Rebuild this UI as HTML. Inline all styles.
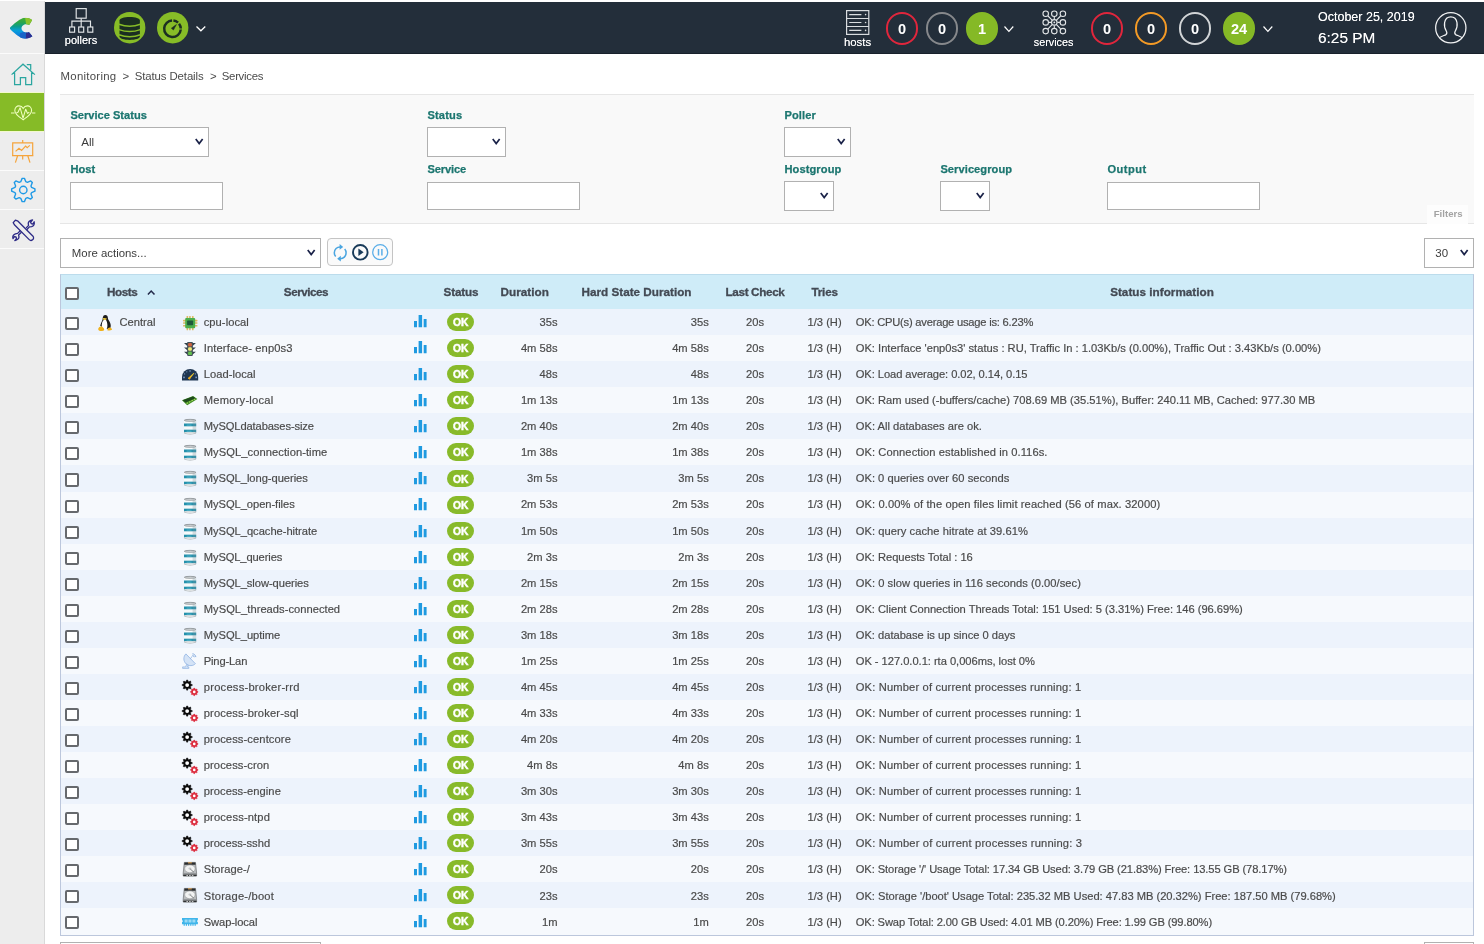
<!DOCTYPE html>
<html><head><meta charset="utf-8"><title>Centreon - Services</title><style>
*{box-sizing:border-box;margin:0;padding:0}
html,body{width:1484px;height:944px;overflow:hidden;background:#fff}
body{position:relative;will-change:transform;font-family:"Liberation Sans",sans-serif;color:#4a4a4a;font-size:11.17px}
.abs,.sb,.sbi,.tb,.tbl,.thead,.r,.r>*,.thead>*,.sel,.inp,.lbl,.circ,.tbt{position:absolute}
svg{position:absolute;overflow:visible}
/* sidebar */
.sb{left:0;top:1.3px;width:45px;height:943px;background:#ededed;border-right:1px solid #d9d9d9}
.sbi{left:0;width:44px;height:38.75px;border-top:1px solid #fbfbfb}
.sbi.act{background:#85b926;width:44px}
/* topbar */
.tb{left:45px;top:2px;width:1439px;height:51.8px;background:#232e3a;border-bottom:1px solid #18212b}
.tbt{text-shadow:0 0 0.6px rgba(255,255,255,.75);color:#fff;white-space:nowrap;font-size:11px;line-height:12px;transform:translateX(-50%)}
.circ{width:32.5px;height:32.5px;border-radius:50%;top:10px;border:2px solid #fff;color:#fff;font-weight:bold;font-size:14.6px;text-align:center;line-height:30.3px}
.circ.g{background:#85b926;border-color:#85b926}
/* breadcrumb */
.bc{position:absolute;top:69.2px;font-size:11.4px;line-height:14px;color:#4a4a4a;white-space:nowrap}
/* filters */
.fp{position:absolute;left:60px;top:94px;width:1414px;height:129.5px;background:#f9f9f9;border-top:1px solid #e6e6e6;border-bottom:1px solid #e6e6e6}
.lbl{-webkit-text-stroke:0.25px;font-weight:bold;color:#1c7670;font-size:11.1px;line-height:13px;white-space:nowrap}
.sel,.inp{background:#fff;border:1px solid #b1b1b1}
.sel i{position:absolute;right:7px;top:50%;width:8px;height:6px;margin-top:-2.5px}
.sel span{position:absolute;left:10px;top:0;line-height:28px;font-size:11.6px;color:#3c3c3c;white-space:nowrap}
.ftab{position:absolute;left:1426.75px;top:205px;width:41.5px;height:19px;background:#fdfdfd;color:#a3a3a3;font-weight:bold;font-size:9.6px;line-height:12px;padding:3.2px 0 0 7px}
.bg{position:absolute;left:327px;top:238.25px;width:66px;height:27.5px;border:1px solid #c4c4c4;border-radius:4px;background:#fafafa}
/* table */
.tbl{left:60px;top:274.25px;width:1414px;height:661.75px;background:#f6f9fd;overflow:hidden}
.tbl:after{content:"";position:absolute;left:0;top:0;right:0;bottom:0;border:1px solid #bcc7dc;border-top-color:#bcdcec;pointer-events:none}
.thead{left:0;top:0;width:100%;height:34.5px;background:#cfecf8}
.th{top:10.8px;-webkit-text-stroke:0.3px;font-weight:bold;color:#434a54;font-size:11.7px;line-height:14px;white-space:nowrap}
.c{transform:translateX(-50%)}
.r{left:0;width:100%;height:27.5px}
.r.a{background:#edf3fc}
.r.b{background:#f6f9fd}
.t{-webkit-text-stroke:0.18px;top:var(--o);line-height:26px;white-space:nowrap;color:#4a4a4a}
.ra{text-align:right}
.cb{left:5.1px;top:8.1px;width:13.9px;height:13.2px;border:2px solid #66696d;border-radius:2px;background:#fff}
.ok{left:386.75px;top:4.25px;width:27.25px;height:17.75px;border-radius:9px;background:#88ba2a;color:#fff;font-weight:bold;font-size:10.3px;line-height:19.2px;text-align:center;letter-spacing:0;-webkit-text-stroke:0.45px #fff;text-indent:0.6px}

</style></head>
<body>
<!-- sidebar -->
<div class="sb">
<svg style="left:0;top:0" width="45" height="52" viewBox="0 1.3 45 52">
<defs><linearGradient id="lg" x1="0" y1="18" x2="0" y2="39" gradientUnits="userSpaceOnUse"><stop offset="0" stop-color="#46ae33"/><stop offset="0.22" stop-color="#2aa64a"/><stop offset="0.42" stop-color="#0a9c8c"/><stop offset="0.62" stop-color="#089fdc"/><stop offset="0.8" stop-color="#0c86dc"/><stop offset="1" stop-color="#1763c8"/></linearGradient>
<clipPath id="lc"><path d="M32.2,20.3C29,18 25.5,17.5 22.5,18.5C19,19.8 13,24.8 10.3,27.6C9.8,28.2 9.8,28.9 10.3,29.5C13,32.3 19,37.4 22.5,38.6C25.5,39.5 29.5,38.9 32.4,36.6L28.9,32.2C27.7,33 25.5,33 24,32.2C22.3,31.3 21.5,30 21.5,28.6C21.5,27.2 22.3,25.9 24,25C25.5,24.2 27.5,24.4 29.2,25.2Z"/></clipPath></defs>
<g clip-path="url(#lc)"><rect x="9" y="17" width="25" height="23" fill="url(#lg)"/><path d="M24.8 16h9v13h-7z" fill="#8cc22c"/><path d="M25.6 30l3-1l6 9l-9 3z" fill="#2e2c8e"/><path d="M20 33.5l5.6-2l0 9h-6z" fill="#1763c8"/></g>
</svg>
<div class="sbi" style="top:51.7px">
<svg style="left:10.6px;top:8.3px" width="25" height="23.5" viewBox="0 0 25 23.5"><path d="M0.6 12.6L12 2.2L23.9 12.6M3.6 10.4V22.7H9.4V15.6H14.7V22.7H20.6V10.4M15.8 2.7H19.7V7.8" fill="none" stroke="#2ba6a0" stroke-width="1.25" stroke-linejoin="miter"/></svg>
</div>
<div class="sbi act" style="top:90.4px;height:40.3px;border:0;background:linear-gradient(to bottom,#f3f9cd 0,#f3f9cd 1.5px,#86bb27 1.5px,#86bb27 38.9px,#f3f9cd 38.9px)">
<svg style="left:10.8px;top:13.3px" width="24.4" height="16.4" viewBox="0 0 24.4 16.4"><path d="M0 8H3.6M5.2 8.1L7 7.2L9.1 2.7L12.05 13.1L14.7 4.2L16.5 8.4L18.3 7.2M21 8H24.4" fill="none" stroke="#f0ffc0" stroke-width="1.05" stroke-linejoin="round"/><path d="M12.2 14.8C9 12.4 3.8 9.4 3.8 5.4C3.8 2.8 5.8 0.9 8 0.9C9.8 0.9 11.4 1.9 12.2 3.4C13 1.9 14.6 0.9 16.4 0.9C18.6 0.9 20.6 2.8 20.6 5.4C20.6 9.4 15.4 12.4 12.2 14.8Z" fill="none" stroke="#f0ffc0" stroke-width="1.05"/></svg>
</div>
<div class="sbi" style="top:129.8px;border-top:0">
<svg style="left:12.2px;top:9px" width="21.4" height="23" viewBox="0 0 21.4 23"><path d="M0.7 2.8H20.7V15.6H0.7ZM10.7 0V2.8M0 15.6H21.4M5.6 15.8L3.4 22.6M15.8 15.8L18 22.6M10.7 15.8V19.6M3.6 11.4L7 8.2L9.6 10.4L13.6 6L15.2 7.6L17.8 5.4" fill="none" stroke="#f5a43c" stroke-width="1.2"/></svg>
</div>
<div class="sbi" style="top:168.7px">
<svg style="left:10.6px;top:7.2px" width="24.6" height="24" viewBox="-12.3 -12 24.6 24"><path d="M11.64 -1.15 L11.64 1.15 L8.33 2.53 L7.67 4.10 L9.04 7.42 L7.42 9.04 L4.10 7.67 L2.53 8.33 L1.15 11.64 L-1.15 11.64 L-2.53 8.33 L-4.10 7.67 L-7.42 9.04 L-9.04 7.42 L-7.67 4.10 L-8.33 2.53 L-11.64 1.15 L-11.64 -1.15 L-8.33 -2.53 L-7.67 -4.10 L-9.04 -7.42 L-7.42 -9.04 L-4.10 -7.67 L-2.53 -8.33 L-1.15 -11.64 L1.15 -11.64 L2.53 -8.33 L4.10 -7.67 L7.42 -9.04 L9.04 -7.42 L7.67 -4.10 L8.33 -2.53Z" fill="none" stroke="#1f9ae6" stroke-width="1.4" stroke-linejoin="round"/><circle r="3.7" fill="none" stroke="#1f9ae6" stroke-width="1.4"/></svg>
</div>
<div class="sbi" style="top:207.9px">
<svg style="left:12px;top:8.6px" width="22.6" height="22.8" viewBox="0 0 22.6 22.8"><g fill="none" stroke="#2d2a86" stroke-width="1.3" stroke-linejoin="round" stroke-linecap="round"><path d="M1.2 3.6L3.4 1.2L6 2.2L21 17.2C22 18.4 21.6 20 20.6 20.8C19.6 21.6 18.2 21.6 17.2 20.6L2.4 5.8Z"/><path d="M14.4 8.6L16.6 6.4C15.8 4.2 16.8 2.2 18.8 1.4L20.6 0.9L18.6 3.2L19.2 4.6L20.8 5L22.2 2.8C22.6 5 21.6 7 19.6 7.6L17.4 7.9L15.2 10.2M9.2 13.6L6.6 16C7.4 18.2 6.6 20.2 4.6 21L2.8 21.6L4.6 19.4L4 18L2.4 17.6L1 19.6C0.4 17.6 1.4 15.6 3.4 14.8L5.6 14.4L8 12"/></g></svg>
</div>
<div class="sbi" style="top:246.7px;height:1px"></div>
</div>

<!-- topbar -->
<div class="tb">
<svg style="left:23.8px;top:6.2px" width="24.4" height="24.8" viewBox="0 0 24.4 24.8"><g fill="none" stroke="#e3e6e8" stroke-width="1.15"><rect x="7.2" y="0.6" width="10" height="9.6"/><path d="M12.2 10.2V19M2.9 19V13.2H21.5V19"/><rect x="0.6" y="19" width="5" height="5.2"/><rect x="9.7" y="19" width="5" height="5.2"/><rect x="18.8" y="19" width="5" height="5.2"/></g></svg>
<div class="tbt" style="left:36px;top:32.4px;font-size:11px">pollers</div>
<!-- db circle -->
<svg style="left:68.85px;top:9.7px" width="31.4" height="31.4" viewBox="0 0 31.4 31.4"><circle cx="15.7" cy="15.7" r="15.7" fill="#87bc27"/><path d="M5.5 8.6C5.5 6.6 10 5.1 15.7 5.1S25.9 6.6 25.9 8.6V24.6C25.9 26.6 21.4 28 15.7 28S5.5 26.6 5.5 24.6Z" fill="#1b2e22"/><g fill="none" stroke="#87bc27" stroke-width="1.45"><path d="M5 12.3Q15.7 16.4 26.4 12.3"/><path d="M5 17.6Q15.7 21.4 26.4 17.6"/><path d="M5 22.8Q15.7 26.6 26.4 22.8"/></g></svg>
<!-- gauge circle -->
<svg style="left:112.1px;top:9.7px" width="31.4" height="31.4" viewBox="0 0 31.4 31.4"><circle cx="15.7" cy="15.7" r="15.7" fill="#87bc27"/><circle cx="15.5" cy="16.8" r="8.3" fill="none" stroke="#1b2e22" stroke-width="2.5" stroke-dasharray="37.7 1.4 5.15 1.4 5.15 1.4" transform="rotate(4.8 15.5 16.8)"/><path d="M14.4 16.2L19.4 12.6L16.4 18Z" fill="#1b2e22" stroke="#1b2e22" stroke-width="0.6" stroke-linejoin="round"/></svg>
<svg style="left:150.6px;top:23.8px" width="9.8" height="5.6" viewBox="0 0 9.8 5.6"><path d="M0.5 0.5L4.9 4.8L9.3 0.5" fill="none" stroke="#fff" stroke-width="1.25"/></svg>

<!-- hosts -->
<svg style="left:800.6px;top:8px" width="23.4" height="25" viewBox="0 0 23.4 25"><g fill="none" stroke="#d9dde0" stroke-width="1.2"><rect x="0.6" y="0.6" width="22.2" height="23.8"/><path d="M0.6 8.5H22.8M0.6 16.5H22.8M3.2 4.6H15.4M3.2 12.5H15.4M3.2 20.4H15.4" /></g><g fill="#d9dde0"><circle cx="19.6" cy="4.6" r="0.8"/><circle cx="19.6" cy="12.5" r="0.8"/><circle cx="19.6" cy="20.4" r="0.8"/></g></svg>
<div class="tbt" style="left:812.5px;top:34.4px;font-size:11.4px">hosts</div>
<div class="circ" style="left:840.75px;border-color:#e0263c">0</div>
<div class="circ" style="left:880.75px;border-color:#86888b">0</div>
<div class="circ g" style="left:920.75px">1</div>
<svg style="left:959.4px;top:23.6px" width="9.8" height="6.4" viewBox="0 0 9.8 6.4"><path d="M0.5 0.5L4.9 5.4L9.3 0.5" fill="none" stroke="#fff" stroke-width="1.2"/></svg>
<!-- services -->
<svg style="left:996.5px;top:8px" width="24.6" height="24.8" viewBox="0 0 24.6 24.8"><g fill="none" stroke="#e3e6e8" stroke-width="1.1"><path d="M12.3 9.3V6.8M12.3 15.5V18M9.2 12.4H6.7M15.4 12.4H17.9M10.1 10.2L6 6M14.5 10.2L18.6 6M10.1 14.6L6 18.8M14.5 14.6L18.6 18.8"/><circle cx="3.7" cy="3.7" r="2.75"/><circle cx="12.3" cy="3.7" r="2.75"/><circle cx="20.9" cy="3.7" r="2.75"/><circle cx="3.7" cy="12.4" r="2.75"/><circle cx="12.3" cy="12.4" r="2.75"/><circle cx="20.9" cy="12.4" r="2.75"/><circle cx="3.7" cy="21.1" r="2.75"/><circle cx="12.3" cy="21.1" r="2.75"/><circle cx="20.9" cy="21.1" r="2.75"/></g><circle cx="12.3" cy="12.4" r="0.9" fill="#e3e6e8"/></svg>
<div class="tbt" style="left:1008.6px;top:34.4px;font-size:10.8px">services</div>
<div class="circ" style="left:1045.75px;border-color:#e0263c">0</div>
<div class="circ" style="left:1089.75px;border-color:#f39a26">0</div>
<div class="circ" style="left:1133.75px;border-color:#d1d4d6">0</div>
<div class="circ g" style="left:1177.75px">24</div>
<svg style="left:1218.4px;top:23.6px" width="9.8" height="6.4" viewBox="0 0 9.8 6.4"><path d="M0.5 0.5L4.9 5.4L9.3 0.5" fill="none" stroke="#fff" stroke-width="1.2"/></svg>
<div class="abs" style="left:1273px;top:8.4px;text-shadow:0 0 0.6px rgba(255,255,255,.7);color:#fff;font-size:12.5px;line-height:14px;white-space:nowrap">October 25, 2019</div>
<div class="abs" style="left:1273px;top:26.6px;text-shadow:0 0 0.6px rgba(255,255,255,.7);color:#fff;font-size:15.4px;line-height:18px;white-space:nowrap">6:25 PM</div>
<svg style="left:1390.3px;top:10px" width="31.6" height="31.6" viewBox="0 0 31.6 31.6"><defs><clipPath id="uc"><circle cx="15.8" cy="15.8" r="15"/></clipPath></defs><circle cx="15.8" cy="15.8" r="15.15" fill="none" stroke="#f2f3f4" stroke-width="1.25"/><path clip-path="url(#uc)" d="M2.5 27.5C4.5 24.6 8.6 23.8 11 22.6C12.2 21.6 12 20.2 11.2 18.8C9.6 16.4 9.2 13.4 9.6 10.6C10.2 7 12.6 4.8 15.8 4.8S21.4 7 22 10.6C22.4 13.4 22 16.4 20.4 18.8C19.6 20.2 19.4 21.6 20.6 22.6C23 23.8 27.1 24.6 29.1 27.5" fill="none" stroke="#f2f3f4" stroke-width="1.25"/></svg>
</div>

<!-- breadcrumb -->
<div class="bc" style="left:60.5px;letter-spacing:0.28px">Monitoring</div><div class="bc" style="left:122.4px">&gt;</div><div class="bc" style="left:134.8px;letter-spacing:-0.11px">Status Details</div><div class="bc" style="left:209.9px">&gt;</div><div class="bc" style="left:221.8px;letter-spacing:-0.3px">Services</div>

<!-- filter panel -->
<div class="fp"></div>
<div class="lbl" style="left:70.4px;top:109.3px">Service Status</div>
<div class="sel" style="left:70.25px;top:127.25px;width:138.75px;height:29.75px"><span>All</span><svg style="right:4.7px;top:50%;margin-top:-4.4px" width="8.4" height="7" viewBox="0 0 8.4 7"><path d="M0.75 1L4.2 5.5L7.65 1" fill="none" stroke="#1a2248" stroke-width="1.7"/></svg></div>
<div class="lbl" style="left:427.4px;top:109.3px;letter-spacing:0.182px">Status</div>
<div class="sel" style="left:427.25px;top:127.25px;width:79px;height:29.75px"><svg style="right:4.7px;top:50%;margin-top:-4.4px" width="8.4" height="7" viewBox="0 0 8.4 7"><path d="M0.75 1L4.2 5.5L7.65 1" fill="none" stroke="#1a2248" stroke-width="1.7"/></svg></div>
<div class="lbl" style="left:784.4px;top:109.3px;letter-spacing:0.112px">Poller</div>
<div class="sel" style="left:784.25px;top:127.25px;width:66.75px;height:29.75px"><svg style="right:4.7px;top:50%;margin-top:-4.4px" width="8.4" height="7" viewBox="0 0 8.4 7"><path d="M0.75 1L4.2 5.5L7.65 1" fill="none" stroke="#1a2248" stroke-width="1.7"/></svg></div>
<div class="lbl" style="left:70.4px;top:163.3px;letter-spacing:0.086px">Host</div>
<div class="inp" style="left:70.25px;top:182.25px;width:152.75px;height:27.5px"></div>
<div class="lbl" style="left:427.4px;top:163.3px;letter-spacing:-0.105px">Service</div>
<div class="inp" style="left:427.25px;top:182.25px;width:152.75px;height:27.5px"></div>
<div class="lbl" style="left:784.4px;top:163.3px;letter-spacing:0.102px">Hostgroup</div>
<div class="sel" style="left:784.25px;top:181px;width:50px;height:29.9px"><svg style="right:4.7px;top:50%;margin-top:-4.4px" width="8.4" height="7" viewBox="0 0 8.4 7"><path d="M0.75 1L4.2 5.5L7.65 1" fill="none" stroke="#1a2248" stroke-width="1.7"/></svg></div>
<div class="lbl" style="left:940.4px;top:163.3px;letter-spacing:0.070px">Servicegroup</div>
<div class="sel" style="left:940.25px;top:181px;width:50px;height:29.9px"><svg style="right:4.7px;top:50%;margin-top:-4.4px" width="8.4" height="7" viewBox="0 0 8.4 7"><path d="M0.75 1L4.2 5.5L7.65 1" fill="none" stroke="#1a2248" stroke-width="1.7"/></svg></div>
<div class="lbl" style="left:1107.4px;top:163.3px;letter-spacing:0.500px">Output</div>
<div class="inp" style="left:1107.25px;top:182.25px;width:152.75px;height:27.5px"></div>
<div class="ftab">Filters</div>

<!-- actions row -->
<div class="sel" style="left:60.25px;top:238.25px;width:260.5px;height:29.4px"><span style="left:10.6px;line-height:28.6px;font-size:11.4px">More actions...</span><svg style="right:4.7px;top:50%;margin-top:-4.4px" width="8.4" height="7" viewBox="0 0 8.4 7"><path d="M0.75 1L4.2 5.5L7.65 1" fill="none" stroke="#1a2248" stroke-width="1.7"/></svg></div>
<div class="bg">
<svg style="left:5.2px;top:4.4px" width="14.4" height="17.4" viewBox="0 0 14.4 17.4"><g fill="none" stroke="#4aa5e0" stroke-width="1.5"><path d="M7.4 2.9C4 2.7 1.3 5.4 1.3 8.8C1.3 10.3 1.8 11.5 2.7 12.6"/><path d="M7 14.7C10.4 14.9 13.1 12.2 13.1 8.8C13.1 7.3 12.6 6.1 11.7 5"/></g><path d="M6.6 0L10.2 2.9L6.6 5.8Z" fill="#4aa5e0"/><path d="M7.8 11.8L4.2 14.7L7.8 17.6Z" fill="#4aa5e0"/></svg>
<svg style="left:23.9px;top:4.6px" width="16.6" height="16.6" viewBox="0 0 16.6 16.6"><circle cx="8.3" cy="8.3" r="7.3" fill="none" stroke="#183a59" stroke-width="1.9"/><path d="M6.4 4.6L11.6 8.3L6.4 12Z" fill="#183a59"/></svg>
<svg style="left:44.2px;top:4.6px" width="16.4" height="16.4" viewBox="0 0 16.4 16.4"><circle cx="8.2" cy="8.2" r="7.5" fill="none" stroke="#5aaee8" stroke-width="1.25"/><path d="M6.5 5V11.4M9.9 5V11.4" stroke="#5aaee8" stroke-width="1.5"/></svg>
</div>
<div class="sel" style="left:1424.25px;top:238.25px;width:49.5px;height:29.4px"><span style="left:10px;line-height:28.6px;font-size:11.5px">30</span><svg style="right:4.7px;top:50%;margin-top:-4.4px" width="8.4" height="7" viewBox="0 0 8.4 7"><path d="M0.75 1L4.2 5.5L7.65 1" fill="none" stroke="#1a2248" stroke-width="1.7"/></svg></div>
<div class="tbl">
<div class="thead"><span class="cb" style="left:5.1px;top:12.8px"></span><span class="th" style="left:47px;letter-spacing:-0.447px">Hosts</span><svg style="left:86.6px;top:15.9px" width="8.4" height="5.2" viewBox="0 0 8.4 5.2"><path d="M0.9 4.6L4.2 1.1L7.5 4.6" fill="none" stroke="#232a4a" stroke-width="1.5"/></svg><span class="th c" style="left:246px;letter-spacing:-0.480px">Services</span><span class="th c" style="left:401px;letter-spacing:-0.122px">Status</span><span class="th c" style="left:464.75px;letter-spacing:0.057px">Duration</span><span class="th c" style="left:576.5px;letter-spacing:0.013px">Hard State Duration</span><span class="th c" style="left:695px;letter-spacing:-0.336px">Last Check</span><span class="th c" style="left:764.6px;letter-spacing:-0.209px">Tries</span><span class="th c" style="left:1102px;letter-spacing:0.028px">Status information</span></div>
<div class="r a" style="top:34.25px;--o:0.29px"><span class="cb"></span><svg style="left:37.8px;top:6.05px" width="14.4" height="16.2" viewBox="0 0 14.4 16.2"><path fill="#1c1c1c" d="M7.2 0C9 0 9.9 1.3 9.9 3C9.9 4.5 11.4 6 12.2 8C13 10 12.9 12 12.3 13L9.4 14L4.6 12L2.2 11C2.6 8.6 4 6.4 4.6 4.6C4.8 3.6 4.6 0 7.2 0Z"/><path fill="#fff" d="M6.8 4.4C8.2 4.4 9 6.5 9.3 9C9.6 11.4 9.4 14.6 7 14.6C4.6 14.6 3.6 11.6 3.8 9.4C4.1 6.8 5.4 4.4 6.8 4.4Z"/><path fill="#e3c23e" d="M4.7 3.3C5.9 2.7 8 2.8 8.8 3.4C8.6 4.5 7.6 5.1 6.6 5.1C5.6 5.1 4.7 4.3 4.7 3.3Z"/><path fill="#f0b21e" d="M0.2 14C0.2 12.4 2.4 10.8 4 11.6C5 12.4 6.4 13.6 6.2 14.8C6 15.8 4.4 16.1 3 16.1C1.6 16.1 0.2 15.4 0.2 14ZM9.4 14.4C9.6 13 11.4 12.2 12.6 12.8C13.6 13.4 14.2 14 14 14.6C13.6 15.4 11.6 15.6 10.6 15.6C9.8 15.6 9.3 15.2 9.4 14.4Z"/></svg><span class="t" style="left:59.5px">Central</span><svg style="left:122.8px;top:7.05px" width="14.5" height="14.3" viewBox="0 0 14.5 14.3"><g fill="#dcb95e"><rect x="3.55" y="0" width="1.6" height="14.3" rx="0.6"/><rect x="6.1" y="0" width="1.6" height="14.3" rx="0.6"/><rect x="9.0" y="0" width="1.6" height="14.3" rx="0.6"/><rect x="0" y="3.8" width="14.5" height="1.6" rx="0.6"/><rect x="0" y="6.2" width="14.5" height="1.6" rx="0.6"/><rect x="0" y="8.9" width="14.5" height="1.6" rx="0.6"/></g><rect x="2.2" y="2.1" width="10" height="10.1" rx="1" fill="#4cae4c"/><rect x="4.1" y="4.6" width="6" height="4.6" rx="0.7" fill="#1f5a3a"/></svg><span class="t" id="s0" style="left:143.75px;letter-spacing:0.044px">cpu-local</span><svg style="left:353.8px;top:6.9px" width="12.6" height="12.2" viewBox="0 0 12.6 12.2"><path fill="#1f9ae0" d="M0 5.9h3v6.3h-3zM4.6 0h3.5v12.2h-3.5zM9.7 3.9h2.9v8.3h-2.9z"/></svg><span class="ok">OK</span><span class="t ra" style="right:916.5px">35s</span><span class="t ra" style="right:765.25px">35s</span><span class="t c" style="left:695px">20s</span><span class="t c" style="left:764.6px">1/3 (H)</span><span class="t" id="i0" style="left:795.75px;letter-spacing:-0.219px">OK: CPU(s) average usage is: 6.23%</span></div>
<div class="r b" style="top:60.25px;--o:0.23px"><span class="cb"></span><svg style="left:124px;top:7.2px" width="11.9" height="13.9" viewBox="0 0 11.9 13.9"><path fill="#34424a" d="M0 1.1h11.9l-3 2.6h-5.9zM0 5.4h11.9l-3 2.6h-5.9zM0 9.7h11.9l-3 2.6h-5.9z"/><rect x="3.1" y="0" width="5.8" height="13.9" rx="0.8" fill="#44525a"/><rect x="4.1" y="0.9" width="3.8" height="3.6" rx="1.2" fill="#cb6240"/><rect x="4.1" y="5.2" width="3.8" height="3.6" rx="1.2" fill="#efe876"/><rect x="4.1" y="9.5" width="3.8" height="3.6" rx="1.2" fill="#63c04e"/></svg><span class="t" id="s1" style="left:143.75px;letter-spacing:0.119px">Interface- enp0s3</span><svg style="left:353.8px;top:6.9px" width="12.6" height="12.2" viewBox="0 0 12.6 12.2"><path fill="#1f9ae0" d="M0 5.9h3v6.3h-3zM4.6 0h3.5v12.2h-3.5zM9.7 3.9h2.9v8.3h-2.9z"/></svg><span class="ok">OK</span><span class="t ra" style="right:916.5px">4m 58s</span><span class="t ra" style="right:765.25px">4m 58s</span><span class="t c" style="left:695px">20s</span><span class="t c" style="left:764.6px">1/3 (H)</span><span class="t" id="i1" style="left:795.75px">OK: Interface 'enp0s3' status : RU, Traffic In : 1.03Kb/s (0.00%), Traffic Out : 3.43Kb/s (0.00%)</span></div>
<div class="r a" style="top:86.45px;--o:0.00px"><span class="cb"></span><svg style="left:121.9px;top:8.6px" width="16.2" height="11.4" viewBox="0 0 16.2 11.4"><path fill="#1f3652" d="M0 11.4V8.1A8.1 8.1 0 0 1 16.2 8.1V11.4Z"/><g fill="#7f9cc4"><rect x="1.2" y="7.6" width="1.6" height="1.6"/><circle cx="2.6" cy="4.9" r="0.6"/><circle cx="4.8" cy="2.8" r="0.6"/><rect x="7.2" y="1.5" width="1.8" height="1"/><circle cx="13.4" cy="4.9" r="0.6"/><rect x="13.4" y="7.6" width="1.6" height="1.6"/></g><path d="M5.8 9.2L11.9 3.8L12.3 4.3L7.6 10.6Z" fill="#e9c32c"/><path d="M5.9 9.3L8.2 7.4L9 8.6L7.4 10.5Z" fill="#efa51e"/></svg><span class="t" id="s2" style="left:143.75px;letter-spacing:0.037px">Load-local</span><svg style="left:353.8px;top:6.9px" width="12.6" height="12.2" viewBox="0 0 12.6 12.2"><path fill="#1f9ae0" d="M0 5.9h3v6.3h-3zM4.6 0h3.5v12.2h-3.5zM9.7 3.9h2.9v8.3h-2.9z"/></svg><span class="ok">OK</span><span class="t ra" style="right:916.5px">48s</span><span class="t ra" style="right:765.25px">48s</span><span class="t c" style="left:695px">20s</span><span class="t c" style="left:764.6px">1/3 (H)</span><span class="t" id="i2" style="left:795.75px;letter-spacing:-0.075px">OK: Load average: 0.02, 0.14, 0.15</span></div>
<div class="r b" style="top:112.45px;--o:-0.07px"><span class="cb"></span><svg style="left:122.2px;top:9.1px" width="15.4" height="9.2" viewBox="0 0 15.4 9.2"><path fill="#3d8a22" d="M0 4.3L11.1 0L15.4 3.1L5.2 9.2Z"/><path fill="#1e4a1c" d="M0.6 4.2L11 0.4L13.6 2.2L3.6 6.6Z"/><path d="M4.6 7.6L14.2 2.6" stroke="#a6d85c" stroke-width="1.1" stroke-dasharray="1.7 1"/></svg><span class="t" id="s3" style="left:143.75px;letter-spacing:0.225px">Memory-local</span><svg style="left:353.8px;top:6.9px" width="12.6" height="12.2" viewBox="0 0 12.6 12.2"><path fill="#1f9ae0" d="M0 5.9h3v6.3h-3zM4.6 0h3.5v12.2h-3.5zM9.7 3.9h2.9v8.3h-2.9z"/></svg><span class="ok">OK</span><span class="t ra" style="right:916.5px">1m 13s</span><span class="t ra" style="right:765.25px">1m 13s</span><span class="t c" style="left:695px">20s</span><span class="t c" style="left:764.6px">1/3 (H)</span><span class="t" id="i3" style="left:795.75px">OK: Ram used (-buffers/cache) 708.69 MB (35.51%), Buffer: 240.11 MB, Cached: 977.30 MB</span></div>
<div class="r a" style="top:138.65px;--o:-0.27px"><span class="cb"></span><svg style="left:123.9px;top:6.1px" width="12.2" height="15.4" viewBox="0 0 12.2 15.4"><path d="M0 1.3V14.1C0 14.8 2.7 15.4 6.1 15.4S12.2 14.8 12.2 14.1V1.3Z" fill="#f7f9fa"/><rect x="0" y="4.5" width="12.2" height="2.8" fill="#2390ab"/><rect x="0" y="10.7" width="12.2" height="2.6" fill="#2390ab"/><rect x="2.6" y="5.7" width="5" height="0.7" fill="#6cc0d6"/><rect x="2.6" y="11.8" width="5" height="0.7" fill="#6cc0d6"/><rect x="2.6" y="2.4" width="5" height="0.9" fill="#fff"/><rect x="8.6" y="1.3" width="3.6" height="13" fill="#7d959e" opacity="0.3"/><path d="M0 13.5V14.1C0 14.8 2.7 15.4 6.1 15.4S12.2 14.8 12.2 14.1V13.5Z" fill="#a4abaf"/><path d="M0.9 13.5V13.9C0.9 14.3 3 14.7 6.1 14.7S11.3 14.3 11.3 13.9V13.5Z" fill="#f1f3f4"/><ellipse cx="6.1" cy="1.3" rx="5.75" ry="0.95" fill="#d9dddf" stroke="#868d91" stroke-width="0.8"/></svg><span class="t" id="s4" style="left:143.75px;letter-spacing:-0.110px">MySQLdatabases-size</span><svg style="left:353.8px;top:6.9px" width="12.6" height="12.2" viewBox="0 0 12.6 12.2"><path fill="#1f9ae0" d="M0 5.9h3v6.3h-3zM4.6 0h3.5v12.2h-3.5zM9.7 3.9h2.9v8.3h-2.9z"/></svg><span class="ok">OK</span><span class="t ra" style="right:916.5px">2m 40s</span><span class="t ra" style="right:765.25px">2m 40s</span><span class="t c" style="left:695px">20s</span><span class="t c" style="left:764.6px">1/3 (H)</span><span class="t" id="i4" style="left:795.75px;letter-spacing:0.010px">OK: All databases are ok.</span></div>
<div class="r b" style="top:164.95px;--o:-0.41px"><span class="cb"></span><svg style="left:123.9px;top:6.1px" width="12.2" height="15.4" viewBox="0 0 12.2 15.4"><path d="M0 1.3V14.1C0 14.8 2.7 15.4 6.1 15.4S12.2 14.8 12.2 14.1V1.3Z" fill="#f7f9fa"/><rect x="0" y="4.5" width="12.2" height="2.8" fill="#2390ab"/><rect x="0" y="10.7" width="12.2" height="2.6" fill="#2390ab"/><rect x="2.6" y="5.7" width="5" height="0.7" fill="#6cc0d6"/><rect x="2.6" y="11.8" width="5" height="0.7" fill="#6cc0d6"/><rect x="2.6" y="2.4" width="5" height="0.9" fill="#fff"/><rect x="8.6" y="1.3" width="3.6" height="13" fill="#7d959e" opacity="0.3"/><path d="M0 13.5V14.1C0 14.8 2.7 15.4 6.1 15.4S12.2 14.8 12.2 14.1V13.5Z" fill="#a4abaf"/><path d="M0.9 13.5V13.9C0.9 14.3 3 14.7 6.1 14.7S11.3 14.3 11.3 13.9V13.5Z" fill="#f1f3f4"/><ellipse cx="6.1" cy="1.3" rx="5.75" ry="0.95" fill="#d9dddf" stroke="#868d91" stroke-width="0.8"/></svg><span class="t" id="s5" style="left:143.75px;letter-spacing:0.066px">MySQL_connection-time</span><svg style="left:353.8px;top:6.9px" width="12.6" height="12.2" viewBox="0 0 12.6 12.2"><path fill="#1f9ae0" d="M0 5.9h3v6.3h-3zM4.6 0h3.5v12.2h-3.5zM9.7 3.9h2.9v8.3h-2.9z"/></svg><span class="ok">OK</span><span class="t ra" style="right:916.5px">1m 38s</span><span class="t ra" style="right:765.25px">1m 38s</span><span class="t c" style="left:695px">20s</span><span class="t c" style="left:764.6px">1/3 (H)</span><span class="t" id="i5" style="left:795.75px;letter-spacing:0.076px">OK: Connection established in 0.116s.</span></div>
<div class="r a" style="top:191.15px;--o:-0.21px"><span class="cb"></span><svg style="left:123.9px;top:6.1px" width="12.2" height="15.4" viewBox="0 0 12.2 15.4"><path d="M0 1.3V14.1C0 14.8 2.7 15.4 6.1 15.4S12.2 14.8 12.2 14.1V1.3Z" fill="#f7f9fa"/><rect x="0" y="4.5" width="12.2" height="2.8" fill="#2390ab"/><rect x="0" y="10.7" width="12.2" height="2.6" fill="#2390ab"/><rect x="2.6" y="5.7" width="5" height="0.7" fill="#6cc0d6"/><rect x="2.6" y="11.8" width="5" height="0.7" fill="#6cc0d6"/><rect x="2.6" y="2.4" width="5" height="0.9" fill="#fff"/><rect x="8.6" y="1.3" width="3.6" height="13" fill="#7d959e" opacity="0.3"/><path d="M0 13.5V14.1C0 14.8 2.7 15.4 6.1 15.4S12.2 14.8 12.2 14.1V13.5Z" fill="#a4abaf"/><path d="M0.9 13.5V13.9C0.9 14.3 3 14.7 6.1 14.7S11.3 14.3 11.3 13.9V13.5Z" fill="#f1f3f4"/><ellipse cx="6.1" cy="1.3" rx="5.75" ry="0.95" fill="#d9dddf" stroke="#868d91" stroke-width="0.8"/></svg><span class="t" id="s6" style="left:143.75px;letter-spacing:-0.041px">MySQL_long-queries</span><svg style="left:353.8px;top:6.9px" width="12.6" height="12.2" viewBox="0 0 12.6 12.2"><path fill="#1f9ae0" d="M0 5.9h3v6.3h-3zM4.6 0h3.5v12.2h-3.5zM9.7 3.9h2.9v8.3h-2.9z"/></svg><span class="ok">OK</span><span class="t ra" style="right:916.5px">3m 5s</span><span class="t ra" style="right:765.25px">3m 5s</span><span class="t c" style="left:695px">20s</span><span class="t c" style="left:764.6px">1/3 (H)</span><span class="t" id="i6" style="left:795.75px;letter-spacing:0.012px">OK: 0 queries over 60 seconds</span></div>
<div class="r b" style="top:217.25px;--o:-0.07px"><span class="cb"></span><svg style="left:123.9px;top:6.1px" width="12.2" height="15.4" viewBox="0 0 12.2 15.4"><path d="M0 1.3V14.1C0 14.8 2.7 15.4 6.1 15.4S12.2 14.8 12.2 14.1V1.3Z" fill="#f7f9fa"/><rect x="0" y="4.5" width="12.2" height="2.8" fill="#2390ab"/><rect x="0" y="10.7" width="12.2" height="2.6" fill="#2390ab"/><rect x="2.6" y="5.7" width="5" height="0.7" fill="#6cc0d6"/><rect x="2.6" y="11.8" width="5" height="0.7" fill="#6cc0d6"/><rect x="2.6" y="2.4" width="5" height="0.9" fill="#fff"/><rect x="8.6" y="1.3" width="3.6" height="13" fill="#7d959e" opacity="0.3"/><path d="M0 13.5V14.1C0 14.8 2.7 15.4 6.1 15.4S12.2 14.8 12.2 14.1V13.5Z" fill="#a4abaf"/><path d="M0.9 13.5V13.9C0.9 14.3 3 14.7 6.1 14.7S11.3 14.3 11.3 13.9V13.5Z" fill="#f1f3f4"/><ellipse cx="6.1" cy="1.3" rx="5.75" ry="0.95" fill="#d9dddf" stroke="#868d91" stroke-width="0.8"/></svg><span class="t" id="s7" style="left:143.75px;letter-spacing:-0.052px">MySQL_open-files</span><svg style="left:353.8px;top:6.9px" width="12.6" height="12.2" viewBox="0 0 12.6 12.2"><path fill="#1f9ae0" d="M0 5.9h3v6.3h-3zM4.6 0h3.5v12.2h-3.5zM9.7 3.9h2.9v8.3h-2.9z"/></svg><span class="ok">OK</span><span class="t ra" style="right:916.5px">2m 53s</span><span class="t ra" style="right:765.25px">2m 53s</span><span class="t c" style="left:695px">20s</span><span class="t c" style="left:764.6px">1/3 (H)</span><span class="t" id="i7" style="left:795.75px;letter-spacing:0.094px">OK: 0.00% of the open files limit reached (56 of max. 32000)</span></div>
<div class="r a" style="top:243.55px;--o:-0.11px"><span class="cb"></span><svg style="left:123.9px;top:6.1px" width="12.2" height="15.4" viewBox="0 0 12.2 15.4"><path d="M0 1.3V14.1C0 14.8 2.7 15.4 6.1 15.4S12.2 14.8 12.2 14.1V1.3Z" fill="#f7f9fa"/><rect x="0" y="4.5" width="12.2" height="2.8" fill="#2390ab"/><rect x="0" y="10.7" width="12.2" height="2.6" fill="#2390ab"/><rect x="2.6" y="5.7" width="5" height="0.7" fill="#6cc0d6"/><rect x="2.6" y="11.8" width="5" height="0.7" fill="#6cc0d6"/><rect x="2.6" y="2.4" width="5" height="0.9" fill="#fff"/><rect x="8.6" y="1.3" width="3.6" height="13" fill="#7d959e" opacity="0.3"/><path d="M0 13.5V14.1C0 14.8 2.7 15.4 6.1 15.4S12.2 14.8 12.2 14.1V13.5Z" fill="#a4abaf"/><path d="M0.9 13.5V13.9C0.9 14.3 3 14.7 6.1 14.7S11.3 14.3 11.3 13.9V13.5Z" fill="#f1f3f4"/><ellipse cx="6.1" cy="1.3" rx="5.75" ry="0.95" fill="#d9dddf" stroke="#868d91" stroke-width="0.8"/></svg><span class="t" id="s8" style="left:143.75px;letter-spacing:-0.033px">MySQL_qcache-hitrate</span><svg style="left:353.8px;top:6.9px" width="12.6" height="12.2" viewBox="0 0 12.6 12.2"><path fill="#1f9ae0" d="M0 5.9h3v6.3h-3zM4.6 0h3.5v12.2h-3.5zM9.7 3.9h2.9v8.3h-2.9z"/></svg><span class="ok">OK</span><span class="t ra" style="right:916.5px">1m 50s</span><span class="t ra" style="right:765.25px">1m 50s</span><span class="t c" style="left:695px">20s</span><span class="t c" style="left:764.6px">1/3 (H)</span><span class="t" id="i8" style="left:795.75px;letter-spacing:0.049px">OK: query cache hitrate at 39.61%</span></div>
<div class="r b" style="top:269.75px;--o:0.09px"><span class="cb"></span><svg style="left:123.9px;top:6.1px" width="12.2" height="15.4" viewBox="0 0 12.2 15.4"><path d="M0 1.3V14.1C0 14.8 2.7 15.4 6.1 15.4S12.2 14.8 12.2 14.1V1.3Z" fill="#f7f9fa"/><rect x="0" y="4.5" width="12.2" height="2.8" fill="#2390ab"/><rect x="0" y="10.7" width="12.2" height="2.6" fill="#2390ab"/><rect x="2.6" y="5.7" width="5" height="0.7" fill="#6cc0d6"/><rect x="2.6" y="11.8" width="5" height="0.7" fill="#6cc0d6"/><rect x="2.6" y="2.4" width="5" height="0.9" fill="#fff"/><rect x="8.6" y="1.3" width="3.6" height="13" fill="#7d959e" opacity="0.3"/><path d="M0 13.5V14.1C0 14.8 2.7 15.4 6.1 15.4S12.2 14.8 12.2 14.1V13.5Z" fill="#a4abaf"/><path d="M0.9 13.5V13.9C0.9 14.3 3 14.7 6.1 14.7S11.3 14.3 11.3 13.9V13.5Z" fill="#f1f3f4"/><ellipse cx="6.1" cy="1.3" rx="5.75" ry="0.95" fill="#d9dddf" stroke="#868d91" stroke-width="0.8"/></svg><span class="t" id="s9" style="left:143.75px;letter-spacing:-0.119px">MySQL_queries</span><svg style="left:353.8px;top:6.9px" width="12.6" height="12.2" viewBox="0 0 12.6 12.2"><path fill="#1f9ae0" d="M0 5.9h3v6.3h-3zM4.6 0h3.5v12.2h-3.5zM9.7 3.9h2.9v8.3h-2.9z"/></svg><span class="ok">OK</span><span class="t ra" style="right:916.5px">2m 3s</span><span class="t ra" style="right:765.25px">2m 3s</span><span class="t c" style="left:695px">20s</span><span class="t c" style="left:764.6px">1/3 (H)</span><span class="t" id="i9" style="left:795.75px;letter-spacing:-0.025px">OK: Requests Total : 16</span></div>
<div class="r a" style="top:295.80px;--o:-0.07px"><span class="cb"></span><svg style="left:123.9px;top:6.1px" width="12.2" height="15.4" viewBox="0 0 12.2 15.4"><path d="M0 1.3V14.1C0 14.8 2.7 15.4 6.1 15.4S12.2 14.8 12.2 14.1V1.3Z" fill="#f7f9fa"/><rect x="0" y="4.5" width="12.2" height="2.8" fill="#2390ab"/><rect x="0" y="10.7" width="12.2" height="2.6" fill="#2390ab"/><rect x="2.6" y="5.7" width="5" height="0.7" fill="#6cc0d6"/><rect x="2.6" y="11.8" width="5" height="0.7" fill="#6cc0d6"/><rect x="2.6" y="2.4" width="5" height="0.9" fill="#fff"/><rect x="8.6" y="1.3" width="3.6" height="13" fill="#7d959e" opacity="0.3"/><path d="M0 13.5V14.1C0 14.8 2.7 15.4 6.1 15.4S12.2 14.8 12.2 14.1V13.5Z" fill="#a4abaf"/><path d="M0.9 13.5V13.9C0.9 14.3 3 14.7 6.1 14.7S11.3 14.3 11.3 13.9V13.5Z" fill="#f1f3f4"/><ellipse cx="6.1" cy="1.3" rx="5.75" ry="0.95" fill="#d9dddf" stroke="#868d91" stroke-width="0.8"/></svg><span class="t" id="s10" style="left:143.75px;letter-spacing:-0.055px">MySQL_slow-queries</span><svg style="left:353.8px;top:6.9px" width="12.6" height="12.2" viewBox="0 0 12.6 12.2"><path fill="#1f9ae0" d="M0 5.9h3v6.3h-3zM4.6 0h3.5v12.2h-3.5zM9.7 3.9h2.9v8.3h-2.9z"/></svg><span class="ok">OK</span><span class="t ra" style="right:916.5px">2m 15s</span><span class="t ra" style="right:765.25px">2m 15s</span><span class="t c" style="left:695px">20s</span><span class="t c" style="left:764.6px">1/3 (H)</span><span class="t" id="i10" style="left:795.75px;letter-spacing:0.034px">OK: 0 slow queries in 116 seconds (0.00/sec)</span></div>
<div class="r b" style="top:321.75px;--o:0.23px"><span class="cb"></span><svg style="left:123.9px;top:6.1px" width="12.2" height="15.4" viewBox="0 0 12.2 15.4"><path d="M0 1.3V14.1C0 14.8 2.7 15.4 6.1 15.4S12.2 14.8 12.2 14.1V1.3Z" fill="#f7f9fa"/><rect x="0" y="4.5" width="12.2" height="2.8" fill="#2390ab"/><rect x="0" y="10.7" width="12.2" height="2.6" fill="#2390ab"/><rect x="2.6" y="5.7" width="5" height="0.7" fill="#6cc0d6"/><rect x="2.6" y="11.8" width="5" height="0.7" fill="#6cc0d6"/><rect x="2.6" y="2.4" width="5" height="0.9" fill="#fff"/><rect x="8.6" y="1.3" width="3.6" height="13" fill="#7d959e" opacity="0.3"/><path d="M0 13.5V14.1C0 14.8 2.7 15.4 6.1 15.4S12.2 14.8 12.2 14.1V13.5Z" fill="#a4abaf"/><path d="M0.9 13.5V13.9C0.9 14.3 3 14.7 6.1 14.7S11.3 14.3 11.3 13.9V13.5Z" fill="#f1f3f4"/><ellipse cx="6.1" cy="1.3" rx="5.75" ry="0.95" fill="#d9dddf" stroke="#868d91" stroke-width="0.8"/></svg><span class="t" id="s11" style="left:143.75px;letter-spacing:0.023px">MySQL_threads-connected</span><svg style="left:353.8px;top:6.9px" width="12.6" height="12.2" viewBox="0 0 12.6 12.2"><path fill="#1f9ae0" d="M0 5.9h3v6.3h-3zM4.6 0h3.5v12.2h-3.5zM9.7 3.9h2.9v8.3h-2.9z"/></svg><span class="ok">OK</span><span class="t ra" style="right:916.5px">2m 28s</span><span class="t ra" style="right:765.25px">2m 28s</span><span class="t c" style="left:695px">20s</span><span class="t c" style="left:764.6px">1/3 (H)</span><span class="t" id="i11" style="left:795.75px;letter-spacing:-0.018px">OK: Client Connection Threads Total: 151 Used: 5 (3.31%) Free: 146 (96.69%)</span></div>
<div class="r a" style="top:347.75px;--o:0.18px"><span class="cb"></span><svg style="left:123.9px;top:6.1px" width="12.2" height="15.4" viewBox="0 0 12.2 15.4"><path d="M0 1.3V14.1C0 14.8 2.7 15.4 6.1 15.4S12.2 14.8 12.2 14.1V1.3Z" fill="#f7f9fa"/><rect x="0" y="4.5" width="12.2" height="2.8" fill="#2390ab"/><rect x="0" y="10.7" width="12.2" height="2.6" fill="#2390ab"/><rect x="2.6" y="5.7" width="5" height="0.7" fill="#6cc0d6"/><rect x="2.6" y="11.8" width="5" height="0.7" fill="#6cc0d6"/><rect x="2.6" y="2.4" width="5" height="0.9" fill="#fff"/><rect x="8.6" y="1.3" width="3.6" height="13" fill="#7d959e" opacity="0.3"/><path d="M0 13.5V14.1C0 14.8 2.7 15.4 6.1 15.4S12.2 14.8 12.2 14.1V13.5Z" fill="#a4abaf"/><path d="M0.9 13.5V13.9C0.9 14.3 3 14.7 6.1 14.7S11.3 14.3 11.3 13.9V13.5Z" fill="#f1f3f4"/><ellipse cx="6.1" cy="1.3" rx="5.75" ry="0.95" fill="#d9dddf" stroke="#868d91" stroke-width="0.8"/></svg><span class="t" id="s12" style="left:143.75px;letter-spacing:-0.045px">MySQL_uptime</span><svg style="left:353.8px;top:6.9px" width="12.6" height="12.2" viewBox="0 0 12.6 12.2"><path fill="#1f9ae0" d="M0 5.9h3v6.3h-3zM4.6 0h3.5v12.2h-3.5zM9.7 3.9h2.9v8.3h-2.9z"/></svg><span class="ok">OK</span><span class="t ra" style="right:916.5px">3m 18s</span><span class="t ra" style="right:765.25px">3m 18s</span><span class="t c" style="left:695px">20s</span><span class="t c" style="left:764.6px">1/3 (H)</span><span class="t" id="i12" style="left:795.75px;letter-spacing:-0.015px">OK: database is up since 0 days</span></div>
<div class="r b" style="top:373.95px;--o:-0.07px"><span class="cb"></span><svg style="left:122.3px;top:5.3px" width="14.7" height="15.8" viewBox="0 0 14.7 15.8"><path d="M3.9 0.9C1.1 3.6 1.2 8.2 4.2 10.9C7 13.4 11.1 13.1 13.4 10.7z" fill="#d4e3f6" stroke="#8fb3e2" stroke-width="0.8" stroke-linejoin="round"/><path d="M8.4 5.8L10.2 3.2" stroke="#8fb3e2" stroke-width="0.8"/><path d="M10.5 0.7c1.8 0.3 3.1 1.6 3.4 3.4M10.3 2.2c1.1 0.2 1.8 0.9 2 2" fill="none" stroke="#7da6dc" stroke-width="0.9"/><path d="M4.6 11.4L3.6 13.9h-3v1.5h6.2v-1.5h-1.3l0.8-1.8z" fill="#d4e3f6" stroke="#8fb3e2" stroke-width="0.7" stroke-linejoin="round"/></svg><span class="t" id="s13" style="left:143.75px;letter-spacing:-0.153px">Ping-Lan</span><svg style="left:353.8px;top:6.9px" width="12.6" height="12.2" viewBox="0 0 12.6 12.2"><path fill="#1f9ae0" d="M0 5.9h3v6.3h-3zM4.6 0h3.5v12.2h-3.5zM9.7 3.9h2.9v8.3h-2.9z"/></svg><span class="ok">OK</span><span class="t ra" style="right:916.5px">1m 25s</span><span class="t ra" style="right:765.25px">1m 25s</span><span class="t c" style="left:695px">20s</span><span class="t c" style="left:764.6px">1/3 (H)</span><span class="t" id="i13" style="left:795.75px;letter-spacing:-0.036px">OK - 127.0.0.1: rta 0,006ms, lost 0%</span></div>
<div class="r a" style="top:399.95px;--o:-0.11px"><span class="cb"></span><svg style="left:122px;top:6.2px" width="16.2" height="17.6" viewBox="0 0 16.2 17.6"><polygon points="10.23,4.55 10.23,5.55 8.69,6.12 8.41,6.79 9.09,8.29 8.39,8.99 6.89,8.31 6.22,8.59 5.65,10.13 4.65,10.13 4.08,8.59 3.41,8.31 1.91,8.99 1.21,8.29 1.89,6.79 1.61,6.12 0.07,5.55 0.07,4.55 1.61,3.98 1.89,3.31 1.21,1.81 1.91,1.11 3.41,1.79 4.08,1.51 4.65,-0.03 5.65,-0.03 6.22,1.51 6.89,1.79 8.39,1.11 9.09,1.81 8.41,3.31 8.69,3.98" fill="#0a0a0a" stroke="#0a0a0a" stroke-width="0.5" stroke-linejoin="round"/><circle cx="5.15" cy="5.05" r="1.9" fill="#fff"/><polygon points="16.03,11.53 16.03,12.27 15.03,12.74 14.81,13.27 15.19,14.31 14.66,14.84 13.62,14.46 13.09,14.68 12.62,15.68 11.88,15.68 11.41,14.68 10.88,14.46 9.84,14.84 9.31,14.31 9.69,13.27 9.47,12.74 8.47,12.27 8.47,11.53 9.47,11.06 9.69,10.53 9.31,9.49 9.84,8.96 10.88,9.34 11.41,9.12 11.88,8.12 12.62,8.12 13.09,9.12 13.62,9.34 14.66,8.96 15.19,9.49 14.81,10.53 15.03,11.06" fill="#dc2a3c" stroke="#dc2a3c" stroke-width="0.5" stroke-linejoin="round"/><circle cx="12.25" cy="11.9" r="1.35" fill="#fff"/></svg><span class="t" id="s14" style="left:143.75px;letter-spacing:0.232px">process-broker-rrd</span><svg style="left:353.8px;top:6.9px" width="12.6" height="12.2" viewBox="0 0 12.6 12.2"><path fill="#1f9ae0" d="M0 5.9h3v6.3h-3zM4.6 0h3.5v12.2h-3.5zM9.7 3.9h2.9v8.3h-2.9z"/></svg><span class="ok">OK</span><span class="t ra" style="right:916.5px">4m 45s</span><span class="t ra" style="right:765.25px">4m 45s</span><span class="t c" style="left:695px">20s</span><span class="t c" style="left:764.6px">1/3 (H)</span><span class="t" id="i14" style="left:795.75px;letter-spacing:0.159px">OK: Number of current processes running: 1</span></div>
<div class="r b" style="top:425.50px;--o:0.23px"><span class="cb"></span><svg style="left:122px;top:6.2px" width="16.2" height="17.6" viewBox="0 0 16.2 17.6"><polygon points="10.23,4.55 10.23,5.55 8.69,6.12 8.41,6.79 9.09,8.29 8.39,8.99 6.89,8.31 6.22,8.59 5.65,10.13 4.65,10.13 4.08,8.59 3.41,8.31 1.91,8.99 1.21,8.29 1.89,6.79 1.61,6.12 0.07,5.55 0.07,4.55 1.61,3.98 1.89,3.31 1.21,1.81 1.91,1.11 3.41,1.79 4.08,1.51 4.65,-0.03 5.65,-0.03 6.22,1.51 6.89,1.79 8.39,1.11 9.09,1.81 8.41,3.31 8.69,3.98" fill="#0a0a0a" stroke="#0a0a0a" stroke-width="0.5" stroke-linejoin="round"/><circle cx="5.15" cy="5.05" r="1.9" fill="#fff"/><polygon points="16.03,11.53 16.03,12.27 15.03,12.74 14.81,13.27 15.19,14.31 14.66,14.84 13.62,14.46 13.09,14.68 12.62,15.68 11.88,15.68 11.41,14.68 10.88,14.46 9.84,14.84 9.31,14.31 9.69,13.27 9.47,12.74 8.47,12.27 8.47,11.53 9.47,11.06 9.69,10.53 9.31,9.49 9.84,8.96 10.88,9.34 11.41,9.12 11.88,8.12 12.62,8.12 13.09,9.12 13.62,9.34 14.66,8.96 15.19,9.49 14.81,10.53 15.03,11.06" fill="#dc2a3c" stroke="#dc2a3c" stroke-width="0.5" stroke-linejoin="round"/><circle cx="12.25" cy="11.9" r="1.35" fill="#fff"/></svg><span class="t" id="s15" style="left:143.75px;letter-spacing:0.142px">process-broker-sql</span><svg style="left:353.8px;top:6.9px" width="12.6" height="12.2" viewBox="0 0 12.6 12.2"><path fill="#1f9ae0" d="M0 5.9h3v6.3h-3zM4.6 0h3.5v12.2h-3.5zM9.7 3.9h2.9v8.3h-2.9z"/></svg><span class="ok">OK</span><span class="t ra" style="right:916.5px">4m 33s</span><span class="t ra" style="right:765.25px">4m 33s</span><span class="t c" style="left:695px">20s</span><span class="t c" style="left:764.6px">1/3 (H)</span><span class="t" id="i15" style="left:795.75px;letter-spacing:0.159px">OK: Number of current processes running: 1</span></div>
<div class="r a" style="top:451.60px;--o:0.08px"><span class="cb"></span><svg style="left:122px;top:6.2px" width="16.2" height="17.6" viewBox="0 0 16.2 17.6"><polygon points="10.23,4.55 10.23,5.55 8.69,6.12 8.41,6.79 9.09,8.29 8.39,8.99 6.89,8.31 6.22,8.59 5.65,10.13 4.65,10.13 4.08,8.59 3.41,8.31 1.91,8.99 1.21,8.29 1.89,6.79 1.61,6.12 0.07,5.55 0.07,4.55 1.61,3.98 1.89,3.31 1.21,1.81 1.91,1.11 3.41,1.79 4.08,1.51 4.65,-0.03 5.65,-0.03 6.22,1.51 6.89,1.79 8.39,1.11 9.09,1.81 8.41,3.31 8.69,3.98" fill="#0a0a0a" stroke="#0a0a0a" stroke-width="0.5" stroke-linejoin="round"/><circle cx="5.15" cy="5.05" r="1.9" fill="#fff"/><polygon points="16.03,11.53 16.03,12.27 15.03,12.74 14.81,13.27 15.19,14.31 14.66,14.84 13.62,14.46 13.09,14.68 12.62,15.68 11.88,15.68 11.41,14.68 10.88,14.46 9.84,14.84 9.31,14.31 9.69,13.27 9.47,12.74 8.47,12.27 8.47,11.53 9.47,11.06 9.69,10.53 9.31,9.49 9.84,8.96 10.88,9.34 11.41,9.12 11.88,8.12 12.62,8.12 13.09,9.12 13.62,9.34 14.66,8.96 15.19,9.49 14.81,10.53 15.03,11.06" fill="#dc2a3c" stroke="#dc2a3c" stroke-width="0.5" stroke-linejoin="round"/><circle cx="12.25" cy="11.9" r="1.35" fill="#fff"/></svg><span class="t" id="s16" style="left:143.75px;letter-spacing:0.104px">process-centcore</span><svg style="left:353.8px;top:6.9px" width="12.6" height="12.2" viewBox="0 0 12.6 12.2"><path fill="#1f9ae0" d="M0 5.9h3v6.3h-3zM4.6 0h3.5v12.2h-3.5zM9.7 3.9h2.9v8.3h-2.9z"/></svg><span class="ok">OK</span><span class="t ra" style="right:916.5px">4m 20s</span><span class="t ra" style="right:765.25px">4m 20s</span><span class="t c" style="left:695px">20s</span><span class="t c" style="left:764.6px">1/3 (H)</span><span class="t" id="i16" style="left:795.75px;letter-spacing:0.159px">OK: Number of current processes running: 1</span></div>
<div class="r b" style="top:477.85px;--o:-0.22px"><span class="cb"></span><svg style="left:122px;top:6.2px" width="16.2" height="17.6" viewBox="0 0 16.2 17.6"><polygon points="10.23,4.55 10.23,5.55 8.69,6.12 8.41,6.79 9.09,8.29 8.39,8.99 6.89,8.31 6.22,8.59 5.65,10.13 4.65,10.13 4.08,8.59 3.41,8.31 1.91,8.99 1.21,8.29 1.89,6.79 1.61,6.12 0.07,5.55 0.07,4.55 1.61,3.98 1.89,3.31 1.21,1.81 1.91,1.11 3.41,1.79 4.08,1.51 4.65,-0.03 5.65,-0.03 6.22,1.51 6.89,1.79 8.39,1.11 9.09,1.81 8.41,3.31 8.69,3.98" fill="#0a0a0a" stroke="#0a0a0a" stroke-width="0.5" stroke-linejoin="round"/><circle cx="5.15" cy="5.05" r="1.9" fill="#fff"/><polygon points="16.03,11.53 16.03,12.27 15.03,12.74 14.81,13.27 15.19,14.31 14.66,14.84 13.62,14.46 13.09,14.68 12.62,15.68 11.88,15.68 11.41,14.68 10.88,14.46 9.84,14.84 9.31,14.31 9.69,13.27 9.47,12.74 8.47,12.27 8.47,11.53 9.47,11.06 9.69,10.53 9.31,9.49 9.84,8.96 10.88,9.34 11.41,9.12 11.88,8.12 12.62,8.12 13.09,9.12 13.62,9.34 14.66,8.96 15.19,9.49 14.81,10.53 15.03,11.06" fill="#dc2a3c" stroke="#dc2a3c" stroke-width="0.5" stroke-linejoin="round"/><circle cx="12.25" cy="11.9" r="1.35" fill="#fff"/></svg><span class="t" id="s17" style="left:143.75px;letter-spacing:0.097px">process-cron</span><svg style="left:353.8px;top:6.9px" width="12.6" height="12.2" viewBox="0 0 12.6 12.2"><path fill="#1f9ae0" d="M0 5.9h3v6.3h-3zM4.6 0h3.5v12.2h-3.5zM9.7 3.9h2.9v8.3h-2.9z"/></svg><span class="ok">OK</span><span class="t ra" style="right:916.5px">4m 8s</span><span class="t ra" style="right:765.25px">4m 8s</span><span class="t c" style="left:695px">20s</span><span class="t c" style="left:764.6px">1/3 (H)</span><span class="t" id="i17" style="left:795.75px;letter-spacing:0.159px">OK: Number of current processes running: 1</span></div>
<div class="r a" style="top:503.80px;--o:-0.22px"><span class="cb"></span><svg style="left:122px;top:6.2px" width="16.2" height="17.6" viewBox="0 0 16.2 17.6"><polygon points="10.23,4.55 10.23,5.55 8.69,6.12 8.41,6.79 9.09,8.29 8.39,8.99 6.89,8.31 6.22,8.59 5.65,10.13 4.65,10.13 4.08,8.59 3.41,8.31 1.91,8.99 1.21,8.29 1.89,6.79 1.61,6.12 0.07,5.55 0.07,4.55 1.61,3.98 1.89,3.31 1.21,1.81 1.91,1.11 3.41,1.79 4.08,1.51 4.65,-0.03 5.65,-0.03 6.22,1.51 6.89,1.79 8.39,1.11 9.09,1.81 8.41,3.31 8.69,3.98" fill="#0a0a0a" stroke="#0a0a0a" stroke-width="0.5" stroke-linejoin="round"/><circle cx="5.15" cy="5.05" r="1.9" fill="#fff"/><polygon points="16.03,11.53 16.03,12.27 15.03,12.74 14.81,13.27 15.19,14.31 14.66,14.84 13.62,14.46 13.09,14.68 12.62,15.68 11.88,15.68 11.41,14.68 10.88,14.46 9.84,14.84 9.31,14.31 9.69,13.27 9.47,12.74 8.47,12.27 8.47,11.53 9.47,11.06 9.69,10.53 9.31,9.49 9.84,8.96 10.88,9.34 11.41,9.12 11.88,8.12 12.62,8.12 13.09,9.12 13.62,9.34 14.66,8.96 15.19,9.49 14.81,10.53 15.03,11.06" fill="#dc2a3c" stroke="#dc2a3c" stroke-width="0.5" stroke-linejoin="round"/><circle cx="12.25" cy="11.9" r="1.35" fill="#fff"/></svg><span class="t" id="s18" style="left:143.75px;letter-spacing:0.062px">process-engine</span><svg style="left:353.8px;top:6.9px" width="12.6" height="12.2" viewBox="0 0 12.6 12.2"><path fill="#1f9ae0" d="M0 5.9h3v6.3h-3zM4.6 0h3.5v12.2h-3.5zM9.7 3.9h2.9v8.3h-2.9z"/></svg><span class="ok">OK</span><span class="t ra" style="right:916.5px">3m 30s</span><span class="t ra" style="right:765.25px">3m 30s</span><span class="t c" style="left:695px">20s</span><span class="t c" style="left:764.6px">1/3 (H)</span><span class="t" id="i18" style="left:795.75px;letter-spacing:0.159px">OK: Number of current processes running: 1</span></div>
<div class="r b" style="top:529.75px;--o:0.08px"><span class="cb"></span><svg style="left:122px;top:6.2px" width="16.2" height="17.6" viewBox="0 0 16.2 17.6"><polygon points="10.23,4.55 10.23,5.55 8.69,6.12 8.41,6.79 9.09,8.29 8.39,8.99 6.89,8.31 6.22,8.59 5.65,10.13 4.65,10.13 4.08,8.59 3.41,8.31 1.91,8.99 1.21,8.29 1.89,6.79 1.61,6.12 0.07,5.55 0.07,4.55 1.61,3.98 1.89,3.31 1.21,1.81 1.91,1.11 3.41,1.79 4.08,1.51 4.65,-0.03 5.65,-0.03 6.22,1.51 6.89,1.79 8.39,1.11 9.09,1.81 8.41,3.31 8.69,3.98" fill="#0a0a0a" stroke="#0a0a0a" stroke-width="0.5" stroke-linejoin="round"/><circle cx="5.15" cy="5.05" r="1.9" fill="#fff"/><polygon points="16.03,11.53 16.03,12.27 15.03,12.74 14.81,13.27 15.19,14.31 14.66,14.84 13.62,14.46 13.09,14.68 12.62,15.68 11.88,15.68 11.41,14.68 10.88,14.46 9.84,14.84 9.31,14.31 9.69,13.27 9.47,12.74 8.47,12.27 8.47,11.53 9.47,11.06 9.69,10.53 9.31,9.49 9.84,8.96 10.88,9.34 11.41,9.12 11.88,8.12 12.62,8.12 13.09,9.12 13.62,9.34 14.66,8.96 15.19,9.49 14.81,10.53 15.03,11.06" fill="#dc2a3c" stroke="#dc2a3c" stroke-width="0.5" stroke-linejoin="round"/><circle cx="12.25" cy="11.9" r="1.35" fill="#fff"/></svg><span class="t" id="s19" style="left:143.75px;letter-spacing:0.154px">process-ntpd</span><svg style="left:353.8px;top:6.9px" width="12.6" height="12.2" viewBox="0 0 12.6 12.2"><path fill="#1f9ae0" d="M0 5.9h3v6.3h-3zM4.6 0h3.5v12.2h-3.5zM9.7 3.9h2.9v8.3h-2.9z"/></svg><span class="ok">OK</span><span class="t ra" style="right:916.5px">3m 43s</span><span class="t ra" style="right:765.25px">3m 43s</span><span class="t c" style="left:695px">20s</span><span class="t c" style="left:764.6px">1/3 (H)</span><span class="t" id="i19" style="left:795.75px;letter-spacing:0.159px">OK: Number of current processes running: 1</span></div>
<div class="r a" style="top:555.70px;--o:0.08px"><span class="cb"></span><svg style="left:122px;top:6.2px" width="16.2" height="17.6" viewBox="0 0 16.2 17.6"><polygon points="10.23,4.55 10.23,5.55 8.69,6.12 8.41,6.79 9.09,8.29 8.39,8.99 6.89,8.31 6.22,8.59 5.65,10.13 4.65,10.13 4.08,8.59 3.41,8.31 1.91,8.99 1.21,8.29 1.89,6.79 1.61,6.12 0.07,5.55 0.07,4.55 1.61,3.98 1.89,3.31 1.21,1.81 1.91,1.11 3.41,1.79 4.08,1.51 4.65,-0.03 5.65,-0.03 6.22,1.51 6.89,1.79 8.39,1.11 9.09,1.81 8.41,3.31 8.69,3.98" fill="#0a0a0a" stroke="#0a0a0a" stroke-width="0.5" stroke-linejoin="round"/><circle cx="5.15" cy="5.05" r="1.9" fill="#fff"/><polygon points="16.03,11.53 16.03,12.27 15.03,12.74 14.81,13.27 15.19,14.31 14.66,14.84 13.62,14.46 13.09,14.68 12.62,15.68 11.88,15.68 11.41,14.68 10.88,14.46 9.84,14.84 9.31,14.31 9.69,13.27 9.47,12.74 8.47,12.27 8.47,11.53 9.47,11.06 9.69,10.53 9.31,9.49 9.84,8.96 10.88,9.34 11.41,9.12 11.88,8.12 12.62,8.12 13.09,9.12 13.62,9.34 14.66,8.96 15.19,9.49 14.81,10.53 15.03,11.06" fill="#dc2a3c" stroke="#dc2a3c" stroke-width="0.5" stroke-linejoin="round"/><circle cx="12.25" cy="11.9" r="1.35" fill="#fff"/></svg><span class="t" id="s20" style="left:143.75px">process-sshd</span><svg style="left:353.8px;top:6.9px" width="12.6" height="12.2" viewBox="0 0 12.6 12.2"><path fill="#1f9ae0" d="M0 5.9h3v6.3h-3zM4.6 0h3.5v12.2h-3.5zM9.7 3.9h2.9v8.3h-2.9z"/></svg><span class="ok">OK</span><span class="t ra" style="right:916.5px">3m 55s</span><span class="t ra" style="right:765.25px">3m 55s</span><span class="t c" style="left:695px">20s</span><span class="t c" style="left:764.6px">1/3 (H)</span><span class="t" id="i20" style="left:795.75px;letter-spacing:0.180px">OK: Number of current processes running: 3</span></div>
<div class="r b" style="top:581.65px;--o:0.09px"><span class="cb"></span><svg style="left:123.2px;top:6.6px" width="13.8" height="14.4" viewBox="0 0 13.8 14.4"><path d="M1.3 0.4h11.2l1.1 10.6v2.9h-13.4v-2.9z" fill="#b9bcbe" stroke="#5b5e60" stroke-width="0.6"/><path d="M1.5 0.6h10.8l0.3 2.2h-11.4z" fill="#2a2c2e"/><rect x="5" y="0.2" width="3.8" height="1.2" fill="#d8a45c"/><ellipse cx="6.9" cy="6.8" rx="5.2" ry="3.9" fill="#f2f3f3" stroke="#8d9092" stroke-width="0.5"/><ellipse cx="6.9" cy="6.6" rx="1.5" ry="1.1" fill="#c6c9cb"/><path d="M10.9 10.2L7.2 7" stroke="#777a7c" stroke-width="0.9"/><rect x="0.3" y="11.2" width="13.2" height="1.6" fill="#8b8e90"/><rect x="0.3" y="12.7" width="13.2" height="1.5" fill="#2e3032"/><g fill="#e8e8e8"><rect x="3.4" y="13.1" width="1.6" height="0.8"/><rect x="6.1" y="13.1" width="1.6" height="0.8"/><rect x="8.8" y="13.1" width="1.6" height="0.8"/></g></svg><span class="t" id="s21" style="left:143.75px;letter-spacing:0.029px">Storage-/</span><svg style="left:353.8px;top:6.9px" width="12.6" height="12.2" viewBox="0 0 12.6 12.2"><path fill="#1f9ae0" d="M0 5.9h3v6.3h-3zM4.6 0h3.5v12.2h-3.5zM9.7 3.9h2.9v8.3h-2.9z"/></svg><span class="ok">OK</span><span class="t ra" style="right:916.5px">20s</span><span class="t ra" style="right:765.25px">20s</span><span class="t c" style="left:695px">20s</span><span class="t c" style="left:764.6px">1/3 (H)</span><span class="t" id="i21" style="left:795.75px;letter-spacing:-0.097px">OK: Storage '/' Usage Total: 17.34 GB Used: 3.79 GB (21.83%) Free: 13.55 GB (78.17%)</span></div>
<div class="r a" style="top:607.61px;--o:0.82px"><span class="cb"></span><svg style="left:123.2px;top:6.6px" width="13.8" height="14.4" viewBox="0 0 13.8 14.4"><path d="M1.3 0.4h11.2l1.1 10.6v2.9h-13.4v-2.9z" fill="#b9bcbe" stroke="#5b5e60" stroke-width="0.6"/><path d="M1.5 0.6h10.8l0.3 2.2h-11.4z" fill="#2a2c2e"/><rect x="5" y="0.2" width="3.8" height="1.2" fill="#d8a45c"/><ellipse cx="6.9" cy="6.8" rx="5.2" ry="3.9" fill="#f2f3f3" stroke="#8d9092" stroke-width="0.5"/><ellipse cx="6.9" cy="6.6" rx="1.5" ry="1.1" fill="#c6c9cb"/><path d="M10.9 10.2L7.2 7" stroke="#777a7c" stroke-width="0.9"/><rect x="0.3" y="11.2" width="13.2" height="1.6" fill="#8b8e90"/><rect x="0.3" y="12.7" width="13.2" height="1.5" fill="#2e3032"/><g fill="#e8e8e8"><rect x="3.4" y="13.1" width="1.6" height="0.8"/><rect x="6.1" y="13.1" width="1.6" height="0.8"/><rect x="8.8" y="13.1" width="1.6" height="0.8"/></g></svg><span class="t" id="s22" style="left:143.75px;letter-spacing:0.211px">Storage-/boot</span><svg style="left:353.8px;top:6.9px" width="12.6" height="12.2" viewBox="0 0 12.6 12.2"><path fill="#1f9ae0" d="M0 5.9h3v6.3h-3zM4.6 0h3.5v12.2h-3.5zM9.7 3.9h2.9v8.3h-2.9z"/></svg><span class="ok">OK</span><span class="t ra" style="right:916.5px">23s</span><span class="t ra" style="right:765.25px">23s</span><span class="t c" style="left:695px">20s</span><span class="t c" style="left:764.6px">1/3 (H)</span><span class="t" id="i22" style="left:795.75px;letter-spacing:-0.018px">OK: Storage '/boot' Usage Total: 235.32 MB Used: 47.83 MB (20.32%) Free: 187.50 MB (79.68%)</span></div>
<div class="r b" style="top:633.95px;--o:0.73px"><span class="cb"></span><svg style="left:122.1px;top:9.5px" width="15.9" height="8" viewBox="0 0 15.9 8"><path fill="#3fb5ea" d="M0 0h15.9v2.2a0.9 0.9 0 0 0 0 1.8v2.3h-15.9v-2.3a0.9 0.9 0 0 0 0-1.8z"/><g fill="#3fb5ea"><rect x="1.6" y="5.6" width="1.2" height="2.2"/><rect x="3.8" y="5.6" width="1.2" height="2.2"/><rect x="6.0" y="5.6" width="1.2" height="2.2"/><rect x="8.2" y="5.6" width="1.2" height="2.2"/><rect x="10.4" y="5.6" width="1.2" height="2.2"/><rect x="12.6" y="5.6" width="1.2" height="2.2"/></g><g fill="#9adaf5"><rect x="2.6" y="1.5" width="3" height="3"/><rect x="6.5" y="1.5" width="3" height="3"/><rect x="10.4" y="1.5" width="3" height="3"/></g></svg><span class="t" id="s23" style="left:143.75px;letter-spacing:-0.103px">Swap-local</span><svg style="left:353.8px;top:6.9px" width="12.6" height="12.2" viewBox="0 0 12.6 12.2"><path fill="#1f9ae0" d="M0 5.9h3v6.3h-3zM4.6 0h3.5v12.2h-3.5zM9.7 3.9h2.9v8.3h-2.9z"/></svg><span class="ok">OK</span><span class="t ra" style="right:916.5px">1m</span><span class="t ra" style="right:765.25px">1m</span><span class="t c" style="left:695px">20s</span><span class="t c" style="left:764.6px">1/3 (H)</span><span class="t" id="i23" style="left:795.75px;letter-spacing:-0.120px">OK: Swap Total: 2.00 GB Used: 4.01 MB (0.20%) Free: 1.99 GB (99.80%)</span></div>
</div>
<div class="sel" style="left:60px;top:942px;width:261px;height:29.5px"></div>
<div class="sel" style="left:1424px;top:942px;width:50px;height:29.5px"></div>
</body></html>
